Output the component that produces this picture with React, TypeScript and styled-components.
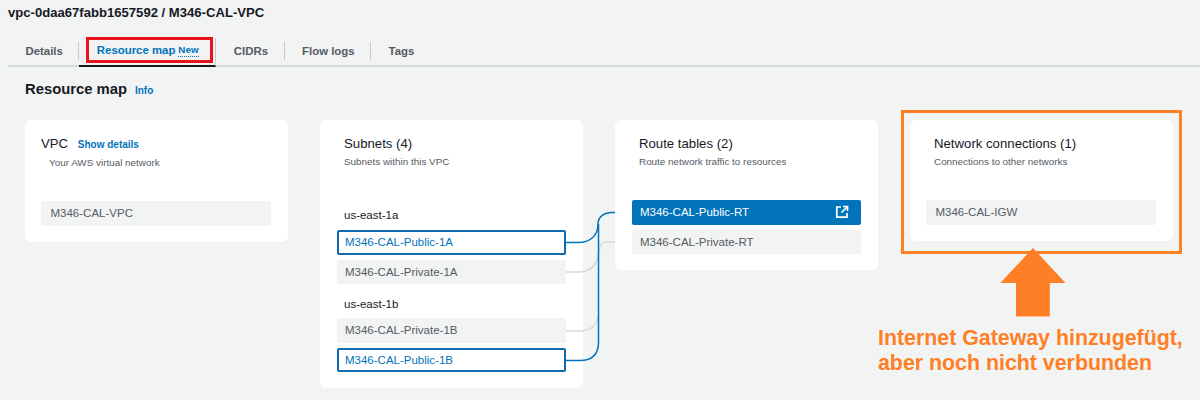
import React from "react";
import styled, { createGlobalStyle } from "styled-components";

const GlobalStyles = createGlobalStyle`
  * { box-sizing: border-box; margin: 0; padding: 0; }
  html, body { height: 400px; overflow: hidden; }
  body {
    background: #f2f3f3;
    font-family: "Liberation Sans", Arial, sans-serif;
    color: #16191f;
  }
`;

const App = () => {
  return (
    <Page>
      <GlobalStyles />
      <PageTitle>vpc-0daa67fabb1657592 / M346-CAL-VPC</PageTitle>
      <TabBar>
        <Tab>Details</Tab>
        <ActiveTab>
          Resource map <NewBadge>New</NewBadge>
        </ActiveTab>
        <Tab>CIDRs</Tab>
        <Tab>Flow logs</Tab>
        <Tab $last>Tags</Tab>
      </TabBar>

      <SectionHead>
        <SectionTitle>Resource map</SectionTitle>
        <InfoLink>Info</InfoLink>
      </SectionHead>

      <MapGrid>
        <Card>
          <CardTitle $flush>
            VPC <DetailsLink>Show details</DetailsLink>
          </CardTitle>
          <CardSub>Your AWS virtual network</CardSub>
          <Rows>
            <Row>M346-CAL-VPC</Row>
          </Rows>
        </Card>

        <Card $inset>
          <CardTitle>Subnets (4)</CardTitle>
          <CardSub>Subnets within this VPC</CardSub>
          <ZoneLabel>us-east-1a</ZoneLabel>
          <RowStack>
            <LinkedRow>M346-CAL-Public-1A</LinkedRow>
            <Row>M346-CAL-Private-1A</Row>
          </RowStack>
          <ZoneLabel $second>us-east-1b</ZoneLabel>
          <RowStack>
            <Row>M346-CAL-Private-1B</Row>
            <LinkedRow>M346-CAL-Public-1B</LinkedRow>
          </RowStack>
          <Connectors width="70" height="170" viewBox="0 0 70 170" fill="none">
            <path d="M0 72H12C24 72 30 66 32 56C34 46 34 42 42 42H66" stroke="#d5dbdb" strokeWidth="1.5" />
            <path d="M0 131H12C24 131 31 126 32 116" stroke="#d5dbdb" strokeWidth="1.5" />
            <path d="M0 42.500H12C24 42.500 32 36 32 24C32 17 38 12.500 46 12.500H66" stroke="#0073bb" strokeWidth="1.5" />
            <path d="M0 160.500H14C26 160.500 32.500 154 32.500 142V24" stroke="#0073bb" strokeWidth="1.5" />
          </Connectors>
        </Card>

        <Card $inset>
          <CardTitle>Route tables (2)</CardTitle>
          <CardSub>Route network traffic to resources</CardSub>
          <RowStack $top={32}>
            <SelectedRow>
              M346-CAL-Public-RT
              <svg width="14" height="14" viewBox="0 0 14 14" fill="none" stroke="#fff" strokeWidth="1.7">
                <path d="M6 2H1.800V12.200H12V8" />
                <path d="M8 1.500H12.500V6M12.500 1.500L6.500 7.500" />
              </svg>
            </SelectedRow>
            <Row>M346-CAL-Private-RT</Row>
          </RowStack>
        </Card>

        <CalloutColumn>
          <FramedCard>
            <CardTitle>Network connections (1)</CardTitle>
            <CardSub>Connections to other networks</CardSub>
            <Rows>
              <Row>M346-CAL-IGW</Row>
            </Rows>
          </FramedCard>
          <CalloutArrow width="66" height="69" viewBox="0 0 66 69">
            <path d="M33 0L65.500 35H49.800V68.500H16V35H0.300Z" fill="#ff7f27" />
          </CalloutArrow>
          <CalloutText>
            Internet Gateway hinzugefügt,
            <br />
            aber noch nicht verbunden
          </CalloutText>
        </CalloutColumn>
      </MapGrid>
    </Page>
  );
};

export default App;

const Page = styled.div`
  height: 400px;
  overflow: hidden;
`;

const PageTitle = styled.h1`
  font-size: 13.100px;
  line-height: 16px;
  font-weight: 700;
  padding: 5px 0 0 8px;
`;

const TabBar = styled.div`
  display: flex;
  align-items: center;
  height: 29px;
  margin: 17px 0 0 8px;
  padding-bottom: 1px;
  border-bottom: 2px solid #d5dbdb;
`;

const Tab = styled.div<{ $last?: boolean }>`
  font-size: 11.400px;
  font-weight: 700;
  color: #545b64;
  line-height: 18px;
  padding: 0 15.500px 0 17.500px;
  border-right: ${(p) => (p.$last ? "none" : "1px solid #c4c9cc")};
`;

const ActiveTab = styled.div`
  position: relative;
  align-self: stretch;
  display: flex;
  align-items: center;
  gap: 3px;
  width: 137px;
  margin-bottom: -3px;
  padding: 0 0 3px 17.500px;
  font-size: 11.400px;
  font-weight: 700;
  color: #0073bb;
  border-bottom: 2px solid #16191f;
  border-right: 1px solid #c4c9cc;

  &::after {
    content: "";
    position: absolute;
    box-sizing: border-box;
    left: 7px;
    top: -1px;
    width: 127px;
    height: 26px;
    border: 3px solid #e8141c;
  }
`;

const NewBadge = styled.span`
  font-size: 9.800px;
  line-height: 13px;
  border-bottom: 1px dotted #0073bb;
`;

const SectionHead = styled.div`
  display: flex;
  align-items: baseline;
  gap: 8px;
  margin: 12px 0 0 25px;
`;

const SectionTitle = styled.h2`
  font-size: 14.800px;
  line-height: 20px;
  font-weight: 700;
`;

const InfoLink = styled.span`
  font-size: 10px;
  font-weight: 700;
  color: #0073bb;
`;

const MapGrid = styled.div`
  display: grid;
  grid-template-columns: repeat(4, 263px);
  column-gap: 32px;
  align-items: start;
  margin: 21px 0 0 25px;
`;

const Card = styled.section<{ $inset?: boolean }>`
  --text-indent: ${(p) => (p.$inset ? "7px" : "8px")};
  --row-pad: ${(p) => (p.$inset ? "8px" : "9.500px")};
  position: relative;
  background: #fff;
  border-radius: 6px;
  padding: 16px 17px 16px ${(p) => (p.$inset ? "17px" : "16px")};
`;

const CardTitle = styled.h3<{ $flush?: boolean }>`
  font-size: 13.200px;
  line-height: 16px;
  font-weight: 400;
  padding-left: ${(p) => (p.$flush ? "0" : "var(--text-indent)")};
  color: #16191f;
`;

const DetailsLink = styled.span`
  font-size: 10px;
  font-weight: 700;
  color: #0073bb;
  margin-left: 6px;
`;

const CardSub = styled.p`
  font-size: 9.900px;
  line-height: 13px;
  margin-top: 3px;
  padding-left: var(--text-indent);
  color: #545b64;
`;

const Rows = styled.div`
  margin-top: 32px;
`;

const RowStack = styled.div<{ $top?: number }>`
  display: flex;
  flex-direction: column;
  gap: 5px;
  margin-top: ${(p) => p.$top ?? 0}px;
`;

const Row = styled.div`
  display: flex;
  align-items: center;
  justify-content: space-between;
  height: 24.500px;
  padding: 0 var(--row-pad);
  background: #f2f3f3;
  border-radius: 2px;
  font-size: 11.500px;
  color: #545b64;
`;

const LinkedRow = styled(Row)`
  background: #fff;
  border: 2px solid #0f6cb0;
  padding: 0 6px;
  color: #0073bb;
`;

const SelectedRow = styled(Row)`
  background: #0073bb;
  color: #fff;
  padding-right: 12px;
`;

const ZoneLabel = styled.div<{ $second?: boolean }>`
  font-size: 11.500px;
  line-height: 14px;
  padding-left: 7px;
  margin: ${(p) => (p.$second ? "13px 0 7px" : "40px 0 8px")};
  color: #16191f;
`;

const Connectors = styled.svg`
  position: absolute;
  left: 246px;
  top: 79.500px;
  overflow: visible;
`;

const CalloutColumn = styled.div`
  display: flex;
  flex-direction: column;
`;

const FramedCard = styled(Card)`
  &::before {
    content: "";
    position: absolute;
    inset: -10px -9px -13px -9px;
    border: 3px solid #ff7f27;
    pointer-events: none;
  }
`;

const CalloutArrow = styled.svg`
  display: block;
  margin: 7px 0 0 90px;
`;

const CalloutText = styled.p`
  margin: 9px 0 0 -32px;
  font-size: 21.350px;
  line-height: 25px;
  font-weight: 700;
  color: #ff7f27;
  white-space: nowrap;
`;
